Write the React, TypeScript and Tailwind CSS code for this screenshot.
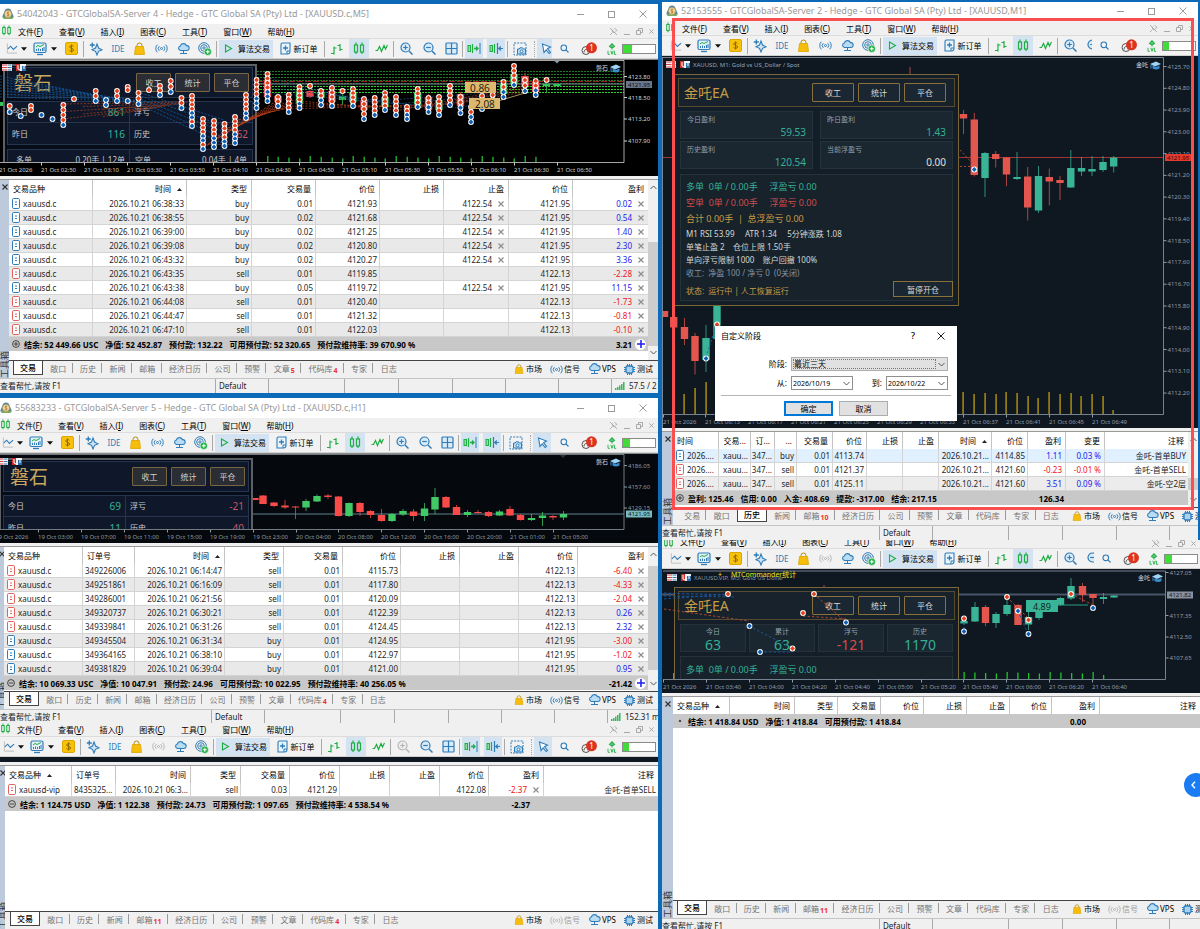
import type { ReactNode } from 'react';
import clsx from 'clsx';

type IconProps = { className?: string };

const BLUE = '#2f7cb8';
const GREEN = '#1fae44';

/* ---------- icons ---------- */

const LogoIcon = () => (
  <svg width="12" height="12" viewBox="0 0 12 12" className="shrink-0">
    <path d="M6 .5c2 0 3 1 3.600 3l1.900 4.500c.3 1.500-.6 3-2.500 3H3c-1.900 0-2.800-1.500-2.500-3L2.400 3.500C3 1.500 4 .5 6 .5z" fill="#5a86a0" />
    <path d="M.6 8.500c.8 2 2 2.500 3.600 2.500H9c1.800 0 2.700-1.200 2.500-2.800-2 1.300-4 1.600-6 1.300C3.500 9.300 1.900 9 .6 8.500z" fill="#7fae5a" />
    <circle cx="6" cy="6" r="3.400" fill="#f4e3b8" stroke="#c9963a" strokeWidth=".7" />
    <path d="M7.300 4.700c-.5-.6-2.500-.7-2.500.4 0 1.200 2.500.6 2.500 1.900 0 1.100-2.100 1-2.700.3M6 3.800v4.500" fill="none" stroke="#b07a1e" strokeWidth=".8" />
  </svg>
);

const CandlesIcon = ({ className }: IconProps) => (
  <svg width="12" height="13" viewBox="0 0 12 13" fill="none" stroke={GREEN} strokeWidth="1.200" className={className}>
    <rect x="1.500" y="3" width="3" height="7" />
    <rect x="7.500" y="3" width="3" height="7" />
    <path d="M3 .5V3M3 10v2M9 .5V3M9 10v2" />
  </svg>
);

const LineIcon = () => (
  <svg width="13" height="13" viewBox="0 0 13 13" fill="none">
    <path d="M1.500 1v10.500H12" stroke="#bdbdbd" />
    <path d="M2 7l3-3 3 3.500L12 4" stroke={BLUE} strokeWidth="1.200" />
  </svg>
);

const CaretIcon = () => (
  <svg width="6" height="4" viewBox="0 0 6 4">
    <path d="M0 .2h6L3 3.700z" fill="#111" />
  </svg>
);

const MonitorIcon = () => (
  <svg width="14" height="14" viewBox="0 0 14 14" fill="none">
    <rect x="1" y="1" width="12" height="9.500" rx="1.500" fill="#e3f0fa" stroke={BLUE} strokeWidth="1.200" />
    <path d="M3 5l2-1.500 2 1 4-2" stroke={GREEN} />
    <path d="M3.500 9V7M5.500 9V6.500M7.500 9V7M9.500 9V6M11 9V5" stroke={BLUE} />
    <path d="M4 12.500h6" stroke={BLUE} strokeWidth="1.300" />
  </svg>
);

const DollarIcon = () => (
  <svg width="13" height="13" viewBox="0 0 13 13">
    <rect x=".5" y=".5" width="12" height="12" rx="1.500" fill="#f9c20a" stroke="#dda500" />
    <path d="M8.500 4.300C7.800 3.300 4.700 3.300 4.700 5c0 1.900 3.900 1 3.900 3 0 1.600-3 1.700-4.200.5M6.500 2.500v8" fill="none" stroke="#8f6b00" />
  </svg>
);

const SparkleIcon = () => (
  <svg width="14" height="14" viewBox="0 0 14 14" fill="none" stroke={BLUE}>
    <path d="M8 2l1.500 4L13 7.800 9.500 9.300 8 13 6.500 9.300 3 7.800 6.500 6z" fill="#cfe4f5" strokeWidth="1.100" />
    <path d="M3.300.5v5M.8 3h5" strokeWidth="1.300" />
  </svg>
);

const BagIcon = ({ size = 13 }: { size?: number }) => (
  <svg width={size} height={size} viewBox="0 0 13 13">
    <path d="M4 5V3.500a2.500 2.500 0 015 0V5" fill="none" stroke="#b88a00" />
    <path d="M2.500 4.500h8l1 8h-10z" fill="#f7bd0b" stroke="#dba400" strokeWidth=".8" />
  </svg>
);

const SignalIcon = ({ muted }: { muted?: boolean }) => (
  <svg width="13" height="11" viewBox="0 0 13 11" fill="none" stroke={muted ? '#b5b5b5' : BLUE}>
    <circle cx="6.500" cy="5.500" r="1" />
    <path d="M4.300 3.200a3.200 3.200 0 000 4.600M8.700 3.200a3.200 3.200 0 010 4.600M2.300 1.700a5.500 5.500 0 000 7.600M10.700 1.700a5.500 5.500 0 010 7.600" />
  </svg>
);

const CloudIcon = () => (
  <svg width="13" height="12" viewBox="0 0 13 12" fill="none" stroke={BLUE}>
    <path d="M3.500 7.500a2.300 2.300 0 01-.2-4.500 3.300 3.300 0 016.200-.3 2.400 2.400 0 01.5 4.800z" fill="#b9dcf5" strokeWidth="1.100" />
    <path d="M6.500 7.500V10M3 10.500h7M5.500 10.500h2" />
  </svg>
);

const RadarIcon = () => (
  <svg width="14" height="14" viewBox="0 0 14 14" fill="none" stroke={BLUE}>
    <circle cx="6" cy="6" r="5.300" />
    <circle cx="6" cy="6" r="3.300" />
    <circle cx="6" cy="6" r="1.200" />
    <circle cx="9.800" cy="9.800" r="3.700" fill={GREEN} stroke="#fff" strokeWidth=".6" />
    <path d="M9.800 7.800v4M7.800 9.800h4" stroke="#fff" strokeWidth="1.100" />
  </svg>
);

const PlayIcon = () => (
  <svg width="9" height="9" viewBox="0 0 9 9" fill="none" stroke={GREEN} strokeWidth="1.100">
    <path d="M1.500 1l6 3.500-6 3.500z" />
  </svg>
);

const NewOrderIcon = () => (
  <svg width="11" height="13" viewBox="0 0 11 13" fill="none" stroke={BLUE}>
    <path d="M1 2.500C1 1 2 1 2.500 1H10v8.500C10 11 9 12 7.500 12H1z" fill="#eaf4fc" strokeWidth="1.100" />
    <path d="M5.500 3.500v5M3 6h5" strokeWidth="1.300" />
    <path d="M7 12V9h3" />
  </svg>
);

const BarsIcon = () => (
  <svg width="12" height="12" viewBox="0 0 12 12" fill="none" stroke={GREEN} strokeWidth="1.200">
    <path d="M3 3.500v8M0 10.500h3M3 5h2.500M9 1v7M6.500 2.500H9M9 6.500h2.500" />
  </svg>
);

const ZigzagIcon = () => (
  <svg width="13" height="9" viewBox="0 0 13 9" fill="none" stroke={GREEN} strokeWidth="1.200">
    <path d="M.5 6.500h2l2-4 2 5 2.500-6 1.500 3.500L12.500 1" />
  </svg>
);

const ZoomIcon = ({ plus, muted }: { plus?: boolean; muted?: boolean }) => (
  <svg width="13" height="13" viewBox="0 0 13 13" fill="none" stroke={muted ? '#b5b5b5' : BLUE}>
    <circle cx="5.500" cy="5.500" r="4.500" fill={muted ? '#eee' : '#d9ebf8'} strokeWidth="1.200" />
    <path d={plus ? 'M5.500 3.200v4.600M3.200 5.500h4.600' : 'M3.200 5.500h4.600'} strokeWidth="1.200" />
    <path d="M9 9l3.500 3.500" strokeWidth="1.500" />
  </svg>
);

const TilesIcon = () => (
  <svg width="13" height="13" viewBox="0 0 13 13" fill="#d9ebf8" stroke={BLUE} strokeWidth="1.200">
    <rect x="1" y="1" width="11" height="11" rx="1" />
    <path d="M6.500 1v11M1 6.500h11" />
  </svg>
);

const ShiftIcon = ({ left }: { left?: boolean }) => (
  <svg width="14" height="13" viewBox="0 0 14 13" fill="none">
    <rect x="1" y="3.500" width="2.500" height="6" fill="#8fdc9f" stroke={GREEN} />
    <path d="M5.500 2v9" stroke={GREEN} strokeWidth="1.200" />
    {left ? (
      <path d="M8.500 1v11M14 6.500h-4M11.800 4.500l-2 2 2 2" stroke={BLUE} strokeWidth="1.200" />
    ) : (
      <>
        <path d="M7 6.500h3.500M9 4.500l2 2-2 2" stroke={GREEN} strokeWidth="1.300" />
        <path d="M13 1v11" stroke={BLUE} />
      </>
    )}
  </svg>
);

const CameraIcon = () => (
  <svg width="14" height="14" viewBox="0 0 14 14" fill="none" stroke={BLUE}>
    <path d="M1 1h12v12H1z" strokeDasharray="2 1.200" />
    <path d="M4.500 7h1.700l.8-1.200h2.500l.8 1.200h2.200v5H4.500z" fill="#b9dcf5" />
    <circle cx="8.500" cy="9.400" r="1.400" fill="#fff" />
  </svg>
);

const CursorIcon = () => (
  <svg width="11" height="12" viewBox="0 0 11 12" fill="#fff" stroke={BLUE} strokeWidth="1.100">
    <path d="M1.500 1l8 3-3 1.700 3 3.800-1.300 1-3-3.700L3 9.500z" />
  </svg>
);

const SearchIcon = () => (
  <svg width="9" height="9" viewBox="0 0 9 9" fill="none" stroke={BLUE} strokeWidth="1.100">
    <circle cx="3.800" cy="3.800" r="2.800" />
    <path d="M6 6l2.500 2.500" />
  </svg>
);

const LevelIcon = () => (
  <svg width="10" height="12" viewBox="0 0 10 12" fill="none" stroke={GREEN} strokeWidth="1.100">
    <path d="M5 6.500V1M2.500 3.300L5 .8l2.500 2.500L5 5z" />
    <path d="M1 7.800v3.500h1.800M3.800 7.800L5 11.300l1.200-3.500M7.400 7.800v3.500h1.800" strokeWidth=".9" />
  </svg>
);

const ChipIcon = () => (
  <svg width="11" height="11" viewBox="0 0 11 11" fill="none" stroke={BLUE}>
    <rect x="2" y="2" width="7" height="7" rx="1.500" fill="#a9d2f0" strokeWidth="1.300" />
    <path d="M3.500 0v2M5.500 0v2M7.500 0v2M3.500 9v2M5.500 9v2M7.500 9v2M0 3.500h2M0 5.500h2M0 7.500h2M9 3.500h2M9 5.500h2M9 7.500h2" />
  </svg>
);

const DocIcon = ({ sell }: { sell: boolean }) => (
  <svg width="8" height="11" viewBox="0 0 8 11" fill="#fff" stroke={sell ? '#e2625f' : BLUE} className="shrink-0">
    <rect x=".5" y=".5" width="7" height="10" rx="1.200" />
    <path d="M3 4h2M3 6.500h2" />
  </svg>
);

const SummaryMark = ({ kind }: { kind: 'plus' | 'minus' | 'dot' }) => (
  <svg width="8" height="8" viewBox="0 0 8 8" fill="none" stroke="#333" strokeWidth=".9" className="mr-[4px] inline-block shrink-0">
    {kind === 'dot' ? (
      <circle cx="4" cy="4" r=".8" fill="#333" />
    ) : (
      <>
        <circle cx="4" cy="4" r="3.400" />
        <path d={kind === 'plus' ? 'M4 2v4M2 4h4' : 'M2 4h4'} />
      </>
    )}
  </svg>
);

const PinIcon = () => (
  <svg width="9" height="9" viewBox="0 0 9 9" fill="none" stroke="#a9a9a9" strokeWidth=".9">
    <path d="M1 1l7 7M5.500 1l2.500 2.500-1.500.6M4 2.500L3 4l2 2 1.500-1M3.500 5.500L1 8" />
  </svg>
);

const Cross = ({ className }: IconProps) => (
  <svg width="6" height="6" viewBox="0 0 6 6" fill="none" stroke="currentColor" strokeWidth="1.200" className={className}>
    <path d="M.5.5l5 5M5.500.5l-5 5" />
  </svg>
);

const Chevron = ({ className }: IconProps) => (
  <svg width="7" height="5" viewBox="0 0 7 5" fill="none" stroke="#555" className={className}>
    <path d="M.5 1l3 3 3-3" />
  </svg>
);

/* ---------- window chrome ---------- */

const TitleBar = ({ title, className }: { title: string; className?: string }) => (
  <header className={clsx('flex items-center gap-[3px] overflow-hidden bg-white text-[#999]', className)}>
    <LogoIcon />
    <h2 className="flex-1 truncate text-[9px]">{title}</h2>
    <div className="flex items-center gap-6 pr-[11px]">
      <button aria-label="最小化" className="h-px w-[7px] bg-[#9a9a9a]" />
      <button aria-label="最大化" className="size-[7px] border border-[#9a9a9a]" />
      <button aria-label="关闭" className="text-[#9a9a9a]">
        <svg width="8" height="8" viewBox="0 0 8 8" stroke="currentColor">
          <path d="M.5.5l7 7M7.500.5l-7 7" />
        </svg>
      </button>
    </div>
  </header>
);

const menus = [
  ['文件', 'F'],
  ['查看', 'V'],
  ['插入', 'I'],
  ['图表', 'C'],
  ['工具', 'T'],
  ['窗口', 'W'],
  ['帮助', 'H'],
];

const MenuBar = ({ className }: { className?: string }) => (
  <nav className={clsx('flex overflow-hidden border-b border-[#dcdcdc] bg-[#f0f0f0]', className)}>
    <CandlesIcon className="mr-[6px] size-[11px] shrink-0" />
    <div className="flex flex-1 gap-4 leading-[12px] text-black">
      {menus.map(([name, key]) => (
        <button key={key} className="whitespace-nowrap">
          {name}(<u>{key}</u>)
        </button>
      ))}
    </div>
    <div className="flex items-center gap-[6px] pr-[4px] text-[#a9a9a9]">
      <PinIcon />
      <span className="mt-[5px] h-px w-[6px] bg-[#a9a9a9]" />
      <svg width="7" height="7" viewBox="0 0 7 7" fill="none" stroke="currentColor">
        <path d="M.5 2.500h4v4h-4zM2.500 2.500v-2h4v4h-2" />
      </svg>
      <Cross className="size-[5px]" />
    </div>
  </nav>
);

const Tool = ({ label, className, children }: { label: string; className: string; children: ReactNode }) => (
  <button aria-label={label} className={clsx('flex h-full shrink-0 items-center justify-center', className)}>
    {children}
  </button>
);

const Sep = () => <i className="h-4 w-px shrink-0 bg-[#a8a8a8]" />;

interface ToolbarProps {
  className: string;
  battery: string;
  signalMuted?: boolean;
  zoomMuted?: boolean;
}

const Toolbar = ({ className, battery, signalMuted, zoomMuted }: ToolbarProps) => (
  <div className="flex h-5 overflow-hidden border-b border-[#d0d0d0] bg-[#f2f2f2]">
    <div className="min-w-0 flex-1 overflow-hidden">
      <div className={clsx('flex h-full items-center', className)}>
        <Tool label="线形图" className="w-3"><LineIcon /></Tool>
        <Tool label="线形图选项" className="w-3"><CaretIcon /></Tool>
        <Tool label="指标" className="ml-px w-[18px]"><MonitorIcon /></Tool>
        <Tool label="指标选项" className="w-[10px]"><CaretIcon /></Tool>
        <Tool label="报价" className="w-6"><DollarIcon /></Tool>
        <Sep />
        <Tool label="智能助手" className="w-6"><SparkleIcon /></Tool>
        <Tool label="IDE" className="w-5 text-[8px] text-[#2f7cb8]">IDE</Tool>
        <Tool label="市场" className="w-[22px]"><BagIcon /></Tool>
        <Tool label="信号" className="w-[22px]"><SignalIcon muted={signalMuted} /></Tool>
        <Tool label="VPS" className="w-[22px]"><CloudIcon /></Tool>
        <Tool label="复制" className="w-[22px]"><RadarIcon /></Tool>
        <Sep />
        <button className="ml-[2px] flex h-[18px] w-[54px] shrink-0 items-center gap-[5px] bg-[#d3e3f2] pl-[5px] whitespace-nowrap text-black">
          <PlayIcon />
          算法交易
        </button>
        <button className="flex h-full w-[51px] shrink-0 items-center justify-center gap-[3px] whitespace-nowrap text-black">
          <NewOrderIcon />
          新订单
        </button>
        <Sep />
        <Tool label="柱状图" className="w-6"><BarsIcon /></Tool>
        <Tool label="蜡烛图" className="w-5 bg-[#d3e3f2]"><CandlesIcon /></Tool>
        <Tool label="折线图" className="w-6"><ZigzagIcon /></Tool>
        <Sep />
        <Tool label="放大" className="w-6"><ZoomIcon plus muted={zoomMuted} /></Tool>
        <Tool label="缩小" className="w-[22px]"><ZoomIcon /></Tool>
        <Tool label="平铺" className="w-[22px]"><TilesIcon /></Tool>
        <Sep />
        <Tool label="自动滚动" className="ml-[2px] w-[18px] bg-[#d3e3f2]"><ShiftIcon /></Tool>
        <Tool label="图表平移" className="ml-1 w-[18px] bg-[#d3e3f2]"><ShiftIcon left /></Tool>
        <i className="ml-[2px] h-4 w-px shrink-0 bg-[#a8a8a8]" />
        <Tool label="截图" className="w-6"><CameraIcon /></Tool>
        <i className="mx-[2px] h-4 shrink-0 border-l border-dotted border-[#a8a8a8]" />
        <Tool label="光标" className="w-[18px] bg-[#d3e3f2]"><CursorIcon /></Tool>
      </div>
    </div>
    <div className="flex w-[106px] shrink-0 items-center">
      <Tool label="搜索" className="w-6"><SearchIcon /></Tool>
      <button aria-label="通知" className="relative ml-[4px] h-full w-5">
        <svg width="18" height="14" viewBox="0 0 18 14" fill="none">
          <circle cx="6" cy="8.500" r="4" stroke="#555" />
          <path d="M4 10.500c0-4 4-4 4 0" stroke="#555" />
          <circle cx="11.500" cy="5.800" r="5.500" fill="#dd3420" />
        </svg>
        <span className="absolute top-[4px] left-[9px] w-[5px] text-center text-[8px] leading-[9px] text-white">1</span>
      </button>
      <Tool label="等级" className="ml-[2px] w-5"><LevelIcon /></Tool>
      <div className="flex h-[10px] w-[34px] border border-[#8a8a8a] bg-white">
        <i className={clsx('bg-[#3fdc3a]', battery)} />
      </div>
    </div>
  </div>
);

const StatusBar = ({ first, ping, className }: { first: string; ping?: string; className?: string }) => (
  <footer className={clsx('flex shrink-0 overflow-hidden border-t border-[#c4c4c4] bg-[#f0f0f0] leading-[14px] whitespace-nowrap text-[#1d1d1d]', className)}>
    <span className={clsx('shrink-0', first)}>查看帮忙,请按 F1</span>
    <span className="w-[53px] shrink-0 border-l border-[#a9a9a9] pl-[3px]">Default</span>
    <i className="w-[76px] shrink-0 border-l border-[#a9a9a9]" />
    <i className="w-[54px] shrink-0 border-l border-[#a9a9a9]" />
    <i className="w-[54px] shrink-0 border-l border-[#a9a9a9]" />
    <i className="w-[53px] shrink-0 border-l border-[#a9a9a9]" />
    <i className="w-[53px] shrink-0 border-l border-[#a9a9a9]" />
    {ping && (
      <>
        <i className="w-[53px] shrink-0 border-l border-[#a9a9a9]" />
        <span className="flex items-center gap-[4px] border-l border-[#a9a9a9] pl-[3px]">
          <svg width="10" height="8" viewBox="0 0 10 8" stroke={GREEN} strokeWidth="1.300">
            <path d="M.8 8V6M2.800 8V5M4.800 8V3.500M6.800 8V2M8.800 8V0" />
          </svg>
          {ping}
        </span>
      </>
    )}
  </footer>
);

/* ---------- terminal ---------- */

const tabNames = ['交易', '敞口', '历史', '新闻', '邮箱', '经济日历', '公司', '预警', '文章', '代码库', '专家', '日志'];

interface TabBarProps {
  active: string;
  badges: Record<string, string>;
  className: string;
  signalMuted?: boolean;
}

const TabBar = ({ active, badges, className, signalMuted }: TabBarProps) => (
  <div className="flex h-[18px] shrink-0 items-start overflow-hidden border-t border-[#444] bg-[#f0f0f0]">
    <div role="tablist" className={clsx('flex shrink-0 items-center justify-between', className)}>
      {tabNames.map((name, i) => {
        const on = name === active;
        const beforeOn = tabNames[i + 1] === active;
        return (
          <button
            key={name}
            role="tab"
            aria-selected={on}
            className={clsx(
              'flex h-[14px] items-center justify-center leading-[13px] whitespace-nowrap',
              on ? '-mt-px w-[30px] border border-t-0 border-[#444] bg-white font-medium text-black' : 'grow px-[2px] text-[#747474]',
            )}
          >
            <span className="grow text-center">
              {name}
              {badges[name] && <sub className="ml-px text-[7px] font-bold text-[#f03030]">{badges[name]}</sub>}
            </span>
            {!on && !beforeOn && i < tabNames.length - 1 && <i className="-mr-[2px] h-[10px] w-px bg-[#9a9a9a]" />}
          </button>
        );
      })}
    </div>
    <div className="ml-auto flex h-4 shrink-0 items-center gap-2 pr-[5px] pl-[6px] whitespace-nowrap text-black">
      <button className="flex items-center gap-[2px]"><BagIcon size={10} />市场</button>
      <button className={clsx('flex items-center gap-px', signalMuted && 'text-[#9a9a9a]')}>
        <SignalIcon muted={signalMuted} />信号
      </button>
      <button className="flex items-center gap-px"><CloudIcon />VPS</button>
      <button className="flex items-center gap-[2px]"><ChipIcon />测试</button>
    </div>
  </div>
);

interface Column {
  label: string;
  width?: string;
  kind?: 'symbol' | 'left' | 'closable' | 'signed';
  sorted?: boolean;
}

interface TerminalTableProps {
  columns: Column[];
  rows: string[][];
  sellAt: number;
  summary: string[];
  total: string;
  totalAt: number;
  mark?: 'plus' | 'minus' | 'dot';
  highlightFirst?: boolean;
  addable?: boolean;
}

const signColor = (value: string) => (value.startsWith('-') ? 'text-[#f01515]' : 'text-[#1a1af0]');

const rowColor = (r: number, highlightFirst?: boolean) => {
  if (highlightFirst) return ['bg-[#e0f0ff]', 'bg-white', 'bg-[#ececec]'][r];
  return r % 2 ? 'bg-[#e9e9e9]' : 'bg-white';
};

const TerminalTable = ({ columns, rows, sellAt, summary, total, totalAt, mark = 'plus', highlightFirst, addable }: TerminalTableProps) => (
  <table className="w-full table-fixed border-separate border-spacing-0 text-[#1f1f1f]">
    <thead>
      <tr className="h-[17px]">
        {columns.map((col, i) => (
          <th
            key={i}
            className={clsx(
              'truncate border-[#c4c4c4] p-0 font-normal text-black',
              col.width,
              i < columns.length - 1 && 'border-r',
              col.kind === 'symbol' || col.kind === 'left' ? 'pl-[4px] text-left' : 'pr-[4px] text-right',
            )}
          >
            {col.label}
            {col.sorted && (
              <span className="ml-[6px] inline-block align-middle">
                <svg width="5" height="3" viewBox="0 0 5 3" className="block"><path d="M0 3h5L2.500 0z" fill="#222" /></svg>
              </span>
            )}
          </th>
        ))}
      </tr>
    </thead>
    <tbody>
      {rows.map((row, r) => (
        <tr key={r} className={clsx('h-[14px]', rowColor(r, highlightFirst))}>
          {row.map((cell, i) => {
            const { kind } = columns[i];
            const last = i === columns.length - 1;
            return (
              <td key={i} className={clsx('border-b border-[#d4d4d4] p-0 leading-[12px]', !last && 'border-r')}>
                {kind === 'symbol' && (
                  <span className="flex items-center gap-[3px] overflow-hidden pl-[3px]">
                    <DocIcon sell={row[sellAt] === 'sell'} />
                    <span className="whitespace-nowrap">{cell}</span>
                  </span>
                )}
                {kind === 'left' && <span className="block truncate pl-[2px]">{cell}</span>}
                {kind === 'closable' && cell && (
                  <span className={clsx('flex items-center justify-end gap-[6px] pr-[4px]', columns[i].label === '盈利' && signColor(cell))}>
                    {cell}
                    <button aria-label="平仓" className="text-[#8d8d8d]"><Cross /></button>
                  </span>
                )}
                {kind === 'signed' && <span className={clsx('block pr-[3px] text-right', signColor(cell))}>{cell}</span>}
                {!kind && <span className="block pr-[2px] text-right whitespace-nowrap">{cell}</span>}
              </td>
            );
          })}
        </tr>
      ))}
    </tbody>
    <tfoot>
      <tr className="h-[14px] bg-[#c8c8c8] font-bold text-black">
        <td colSpan={totalAt} className="p-0 pl-[3px] leading-[13px] whitespace-nowrap">
          <span className="flex items-center">
            <SummaryMark kind={mark} />
            <span className="flex gap-[7px]">
              {summary.map((part) => (
                <span key={part}>{part}</span>
              ))}
            </span>
          </span>
        </td>
        <td className="p-0 leading-[13px]">
          <span className={clsx('flex items-center justify-end', addable ? 'gap-[3px] pr-[2px]' : totalAt === 10 ? 'pr-[2px]' : 'pr-[14px]')}>
            {total}
            {addable && (
              <button aria-label="新订单" className="flex size-[11px] items-center justify-center rounded-full bg-white">
                <svg width="8" height="8" viewBox="0 0 8 8" stroke="#2222ee" strokeWidth="1.600"><path d="M4 0v8M0 4h8" /></svg>
              </button>
            )}
          </span>
        </td>
        {columns.length > totalAt + 1 && <td colSpan={columns.length - totalAt - 1} className="p-0" />}
      </tr>
    </tfoot>
  </table>
);

const Terminal = ({ sidebar, scroll, children, tabs }: { sidebar: string; scroll?: string; children: ReactNode; tabs: ReactNode }) => (
  <section className="flex flex-1 border-t border-[#999] bg-white">
    <aside className={clsx('flex shrink-0 flex-col items-center justify-between overflow-hidden bg-[#bccadb] pt-[4px] text-[#333]', sidebar)}>
      <button aria-label="隐藏工具箱"><Cross /></button>
      <span className="rotate-180 text-[9px] leading-[9px] [text-orientation:sideways] [writing-mode:vertical-rl]">工具箱</span>
    </aside>
    <div className="flex min-w-0 flex-1 flex-col">
      <div className="flex flex-1">
        <div className="min-w-0 flex-1">{children}</div>
        {scroll && (
          <div className="flex w-[10px] shrink-0 flex-col items-center bg-[#f0f0f0] py-[5px]">
            <Chevron className="shrink-0 rotate-180" />
            <i className={clsx('w-full bg-[#cdcdcd]', scroll)} />
            <Chevron className="mt-auto shrink-0" />
          </div>
        )}
      </div>
      {tabs}
    </div>
  </section>
);

/* ---------- charts ---------- */

// x, wick top, wick bottom, body top, body bottom, direction
type Candle = [number, number, number, number, number, 'u' | 'd'];

const Candles = ({ data, up, down }: { data: Candle[]; up: string; down: string }) => (
  <>
    {data.map(([x, wt, wb, bt, bb, dir]) => (
      <g key={`${x}-${wt}`} fill={dir === 'u' ? up : down}>
        <rect x={x - 0.5} y={wt} width="1" height={wb - wt} opacity=".75" />
        <rect x={x - 3.7} y={bt} width="7.400" height={bb - bt} />
      </g>
    ))}
  </>
);

const Marker = ({ x, y, sell }: { x: number; y: number; sell: boolean }) => (
  <g>
    <circle cx={x} cy={y} r="2.900" fill="#fff" />
    <path d={`M${x} ${y - 2.4}L${x + 2.4} ${y}L${x} ${y + 2.4}L${x - 2.4} ${y}z`} fill={sell ? '#e2431e' : '#0f5fb4'} />
  </g>
);

interface AxesProps {
  right: number;
  bottom: number;
  top: number;
  left?: number;
  prices: [number, string][];
  times: [number, string][];
  color: string;
}

const Axes = ({ right, bottom, top, left = 0, prices, times, color }: AxesProps) => (
  <g fontSize="6" fill={color} stroke="none">
    <path d={`M${left} ${top}H${right}V${bottom}H${left}`} fill="none" stroke={color} opacity=".8" />
    {prices.map(([y, text]) => (
      <g key={text}>
        <path d={`M${right} ${y}h3`} stroke={color} />
        <text x={right + 4} y={y + 2}>{text}</text>
      </g>
    ))}
    {times.map(([x, text]) => (
      <g key={text}>
        <path d={`M${x + 0.5} ${bottom}v3`} stroke={color} />
        <text x={x} y={bottom + 9}>{text}</text>
      </g>
    ))}
  </g>
);

const PriceTag = ({ x, y, text, fill, color }: { x: number; y: number; text: string; fill: string; color: string }) => (
  <g>
    <rect x={x} y={y - 3.5} width="26" height="7" fill={fill} />
    <text x={x + 2} y={y + 2} fontSize="6" fill={color}>{text}</text>
  </g>
);

const Badges = ({ x, y }: { x: number; y: number }) => (
  <g>
    <rect x={x} y={y} width="10" height="7" fill="#eef2f6" />
    <path d={`M${x} ${y + 1}h5M${x} ${y + 3.5}h5M${x} ${y + 6}h5`} stroke="#d8403c" />
    <path d={`M${x + 5.5} ${y + 1}h4M${x + 5.5} ${y + 3.5}h4M${x + 5.5} ${y + 6}h4`} stroke="#3a74a8" />
    <rect x={x + 14} y={y} width="10" height="7" fill="#eef2f6" />
    <path d={`M${x + 14} ${y}h4v7h-4z`} fill="#c9302c" />
    <path d={`M${x + 20} ${y + 2}h4v5h-4z`} fill="#2d6da8" />
    <path d={`M${x + 16} ${y + 1}v4l2 1M${x + 19} ${y + 1}h3v4`} stroke="#fff" fill="none" />
  </g>
);

const CapLabel = ({ x, y, name }: { x: number; y: number; name: string }) => (
  <g>
    <text x={x - 1} y={y + 2} fontSize="6" fill="#d5dbe2">{name}</text>
    <path d={`M${x + 13} ${y - 1}l6-2.500 5 2.500-6 2.500z`} fill="#9fd4f5" />
    <path d={`M${x + 15.5} ${y + 0.5}v3c2 1.200 5 1.200 7 0v-3l-3.500 1.500z`} fill="#3b8fd0" />
    <path d={`M${x + 14} ${y}v3.500`} stroke="#3b8fd0" />
  </g>
);

// x, first y, last y of each column of deal markers
const dealStacks: [number, number, number, 's' | 'b' | 'm'][] = [
  [9.7, 106, 112, 'm'], [20.7, 116, 116, 'b'], [31, 106, 110, 's'], [41.5, 115, 115, 'b'], [52.5, 119, 119, 'b'],
  [63.3, 105, 125, 'm'], [74, 99, 99, 's'], [95.7, 91, 101, 'm'], [106, 100, 105, 'b'], [117, 91, 101, 'm'],
  [127.700, 87, 90, 's'], [127.700, 101, 101, 'b'], [138.500, 93, 104, 'm'], [149, 90, 90, 's'], [160, 86, 95, 'm'],
  [170.700, 81, 92, 'm'], [181.500, 98, 108, 'm'], [192, 96, 126, 'm'], [203, 119, 149, 'm'], [214, 121, 147, 'm'],
  [224.500, 124, 146, 'm'], [235, 117, 143, 'm'], [246, 95, 118, 'm'], [256.500, 80, 108, 'm'], [267.500, 74, 101, 'm'],
  [278, 97, 106, 'm'], [288.700, 95, 112, 'm'], [299.500, 87, 108, 'm'], [310, 86, 86, 's'], [321, 91, 105, 'm'],
  [332, 88, 106, 'm'], [342.500, 91, 91, 's'], [353, 89, 106, 'm'], [364, 99, 119, 'm'], [374.700, 98, 115, 'm'],
  [385, 93, 110, 'm'], [396, 97, 115, 'm'], [407, 107, 119, 'm'], [417.700, 89, 107, 'm'], [428.500, 98, 112, 'm'],
  [439, 97, 115, 'm'], [450, 86, 105, 'm'], [460.500, 97, 113, 'm'], [471, 107, 122, 'm'], [482, 96, 109, 'm'],
  [492.700, 95, 100, 'm'], [503.500, 82, 97, 'm'], [514, 66, 85, 'm'], [525, 80, 91, 'm'], [535.700, 81, 95, 'm'], [546.500, 80, 80, 's'],
];

const m5Candles: Candle[] = [
  [1, 102, 106, 102, 106, 'u'], [267.500, 78, 97, 80, 97, 'd'], [278, 95, 106, 96, 102, 'd'], [299.500, 90, 104, 92, 103, 'u'],
  [310, 85, 98, 91, 97, 'd'], [321, 88, 106, 92, 98, 'u'], [332, 90, 104, 91, 102, 'd'], [342.500, 90, 105, 96, 100, 'u'],
  [353, 90, 106, 92, 102, 'u'], [364, 98, 112, 100, 110, 'd'], [385, 94, 110, 97, 107, 'u'], [417.700, 88, 110, 93, 108, 'u'],
  [428.500, 94, 112, 97, 110, 'd'], [439, 96, 113, 100, 110, 'u'], [460.500, 92, 113, 94, 106, 'd'], [503.500, 82, 95, 84, 94, 'u'],
  [514, 70, 88, 74, 84, 'u'], [525, 73, 92, 76, 86, 'd'], [535.700, 79, 95, 82, 92, 'd'], [546.500, 79, 92, 84, 86, 'u'], [557, 84, 86, 84, 86, 'u'],
];

const PanelButton = ({ className, children }: { className: string; children: ReactNode }) => (
  <button className={clsx('flex h-[19px] items-center justify-center rounded-[1px] border text-[8px]', className)}>{children}</button>
);

interface StonePanelProps {
  className: string;
  values: [string, string, string, string];
  orders?: [string, string];
}

const StonePanel = ({ className, values, orders }: StonePanelProps) => {
  const cells = [
    ['今日', values[0], 'text-[#35b39c]'],
    ['浮亏', values[1], 'text-[#c75863]'],
    ['昨日', values[2], 'text-[#35b39c]'],
    ['历史', values[3], 'text-[#c75863]'],
  ];
  return (
    <div className={clsx('absolute w-[254px] overflow-hidden border-2 border-b-0 border-[#5d6064] bg-[#070d18] px-[2px] pt-px', className)}>
      <div className="flex h-[31px] items-center gap-[4px] border border-[#26354d] bg-[#0f182a] pr-[3px] pl-[6px]">
        <h3 className="flex-1 text-[19px] leading-[20px] text-[#c9a860]">磐石</h3>
        {['收工', '统计', '平仓'].map((name) => (
          <PanelButton key={name} className="w-[35px] border-[#79663f] bg-[#2a2d33] text-[#d2d2d2]">{name}</PanelButton>
        ))}
      </div>
      <div className="mt-[3px] grid grid-cols-2 border border-[#26354d] bg-[#0f182a]">
        {cells.map(([name, value, tone], i) => (
          <div key={name} className={clsx('flex h-[21px] items-center justify-between border-[#26354d] px-[4px] text-[#c8ccd2]', i < 2 && 'border-b', i % 2 === 0 && 'border-r')}>
            <span>{name}</span>
            <span className={clsx('text-[10px]', tone)}>{value}</span>
          </div>
        ))}
      </div>
      {orders && (
        <div className="mt-[4px] grid grid-cols-2 border border-[#26354d] bg-[#0f182a] text-[#c8ccd2]">
          <div className="flex h-5 items-center justify-between border-r border-[#26354d] pr-[4px] pl-2"><span>多单</span><span>{orders[0]}</span></div>
          <div className="flex h-5 items-center justify-between px-[5px]"><span>空单</span><span>{orders[1]}</span></div>
        </div>
      )}
    </div>
  );
};

const JinzhaPanel = ({ className, children }: { className: string; children: ReactNode }) => (
  <div className={clsx('absolute w-[285px] overflow-hidden border border-[#7b6637] bg-[#141e28] px-[3px] pt-[3px] text-[#d8d8d2]', className)}>
    <div className="flex h-[29px] items-center gap-[4px] border border-[#574b2f] bg-[#17222d] pr-2 pl-[5px]">
      <h3 className="flex-1 text-[14px] leading-[18px] text-[#c69c45]">金吒EA</h3>
      {['收工', '统计', '平仓'].map((name) => (
        <PanelButton key={name} className="w-[42px] border-[#8a713b] bg-[#1a2632] text-[#dcdcd6]">{name}</PanelButton>
      ))}
    </div>
    {children}
  </div>
);

const ScalperChart = () => (
  <div className="relative h-[117px] overflow-hidden bg-black">
    <svg width="660" height="117" viewBox="0 59 660 117" className="block">
      {Array.from({ length: 8 }, (_, i) => (
        <path key={i} d={`M257 ${71.5 + i * 3}H624`} stroke={i > 4 ? '#2bd12b' : '#1c7a24'} strokeDasharray="2 1" />
      ))}
      <path d="M257 81.500H624" stroke="#9c1d1d" strokeDasharray="6 2" />
      <path d="M257 84H624" stroke="#7c8894" />
      <Candles data={m5Candles} up="#35c45c" down="#f2474a" />
      {dealStacks.slice(24, 50).map(([x], i) => (
        <rect key={x} x={x - 0.5} y={156 + (i % 4) * 0.8} width="1.500" height={6 - (i % 4) * 0.8} fill="#1fa32b" />
      ))}
      <rect x="0" y="59" width="660" height="1" fill="#8a8a8a" />
      <Axes
        right={624}
        bottom={162.5}
        top={60.5}
        color="#d0d0d0"
        prices={[[76.5, '4123.80'], [97.5, '4118.50'], [119, '4113.20'], [141, '4107.90']]}
        times={[
          [-1, '21 Oct 2026'], [41, '21 Oct 02:50'], [84, '21 Oct 03:10'], [127, '21 Oct 03:30'], [170, '21 Oct 03:50'], [213, '21 Oct 04:10'],
          [256, '21 Oct 04:30'], [299, '21 Oct 04:50'], [342, '21 Oct 05:10'], [385, '21 Oct 05:30'], [428, '21 Oct 05:50'], [471, '21 Oct 06:10'],
          [514, '21 Oct 06:30'], [557, '21 Oct 06:50'],
        ]}
      />
      <PriceTag x={626} y={84.5} text="4121.95" fill="#6b7788" color="#111" />
      <path d="M554 60.500h6l-3 3z" fill="#8a95a3" />
      <CapLabel x={597} y={68} name="磐石" />
    </svg>
    <StonePanel className="top-[5px] left-[3px] h-[98px]" values={['861', '', '116', '-62']} orders={['0.20手 | 12单', '0.04手 | 4单']} />
    <svg width="660" height="117" viewBox="0 59 660 117" className="absolute top-0 left-0">
      <g fill="none" strokeWidth=".8">
        {Array.from({ length: 8 }, (_, i) => (
          <path key={i} d={`M0 ${76 + i * 3}L${95 + i * 8} ${95 + i}`} stroke="#0f5c9e" strokeDasharray="2 1.500" />
        ))}
        {Array.from({ length: 7 }, (_, i) => (
          <path key={i} d={`M${63 + (i % 3) * 20} ${104 + i * 2.5}L${190 - i * 6} ${102 + i}`} stroke="#a03a1c" strokeDasharray="2 1.500" />
        ))}
        {Array.from({ length: 8 }, (_, i) => (
          <path key={i} d={`M${203 + i * 5} ${148 - i * 4}L${278 + i * 2} ${100 + i}`} stroke="#b8401c" strokeDasharray="3 1.500" />
        ))}
        {Array.from({ length: 5 }, (_, i) => (
          <path key={i} d={`M138 ${92 + i * 3}L224 ${120 + i * 6}`} stroke="#0f5c9e" strokeDasharray="2 1.500" />
        ))}
        {Array.from({ length: 4 }, (_, i) => (
          <path key={i} d={`M270 ${78 + i * 5}L${364 + i * 30} ${102 + i * 2}L500 ${92 + i * 3}`} stroke="#10497c" strokeDasharray="2 1.500" />
        ))}
        {Array.from({ length: 4 }, (_, i) => (
          <path key={i} d={`M288 ${100 + i * 3}L${400 + i * 18} ${110 - i * 2}L525 ${86 + i * 2}`} stroke="#a03a1c" strokeDasharray="2 1.500" />
        ))}
        <path d="M471 109L525 93" stroke="#d8b469" />
      </g>
      {dealStacks.map(([x, from, to, kind]) => {
        const steps = Math.max(1, Math.round((to - from) / 4.6) + 1);
        return (
          <g key={`${x}-${from}`}>
            {Array.from({ length: steps }, (_, i) => {
              const y = steps === 1 ? from : from + ((to - from) * i) / (steps - 1);
              return <Marker key={i} x={x} y={y} sell={kind === 's' || (kind === 'm' && (i < steps / 2 || (i % 3 === 0 && i < steps - 1)))} />;
            })}
          </g>
        );
      })}
      <Badges x={2} y={64} />
      <g fontSize="10" fill="#2c2412">
        <rect x="465" y="82" width="31" height="11" fill="#dcb96e" />
        <text x="470" y="91.500">0.86</text>
        <rect x="469" y="98" width="31" height="11" fill="#dcb96e" />
        <text x="475" y="107.500">2.08</text>
      </g>
    </svg>
  </div>
);

const h1Candles: Candle[] = [
  [255, 498, 500, 498, 500, 'd'], [263, 495, 504, 495.5, 504, 'd'], [274, 502, 507, 502.5, 506, 'd'], [285, 500, 509, 505.5, 507.5, 'd'],
  [295.5, 506, 519, 506.5, 507.5, 'd'], [306, 499, 511, 501, 507.5, 'u'], [317, 494.5, 502, 496, 501.5, 'u'], [328, 494, 499, 495.5, 497, 'd'],
  [338.5, 496, 516.500, 496.500, 516, 'd'], [349, 502.500, 517, 503, 516, 'u'], [360, 502, 516, 503, 512, 'd'], [370.500, 510, 518, 511, 515, 'd'],
  [381.500, 509, 521.500, 515, 521, 'd'], [392, 513, 522, 514, 521, 'u'], [403, 509, 516, 511, 514.500, 'u'], [413.500, 509, 521, 511.500, 516, 'd'],
  [424.500, 503, 521, 508.500, 516, 'u'], [435, 488, 514, 497, 509.500, 'u'], [446, 496, 508, 497, 507.500, 'd'], [456.500, 505, 515, 507, 515, 'd'],
  [467.500, 510, 517, 512, 515, 'u'], [478, 510, 514, 512, 513, 'd'], [488.500, 511, 517, 512, 516, 'd'], [499.500, 510, 516, 511.500, 515.500, 'u'],
  [510, 506, 516, 509, 515.500, 'd'], [520.500, 514, 520.500, 515, 520, 'd'], [531.500, 514, 521, 518, 520, 'u'], [542.500, 512, 526, 515.500, 518, 'u'],
  [553, 515, 520, 516, 517.500, 'd'], [563.500, 511, 520, 514, 517.500, 'u'],
];

const HourChart = () => (
  <div className="relative h-[90px] overflow-hidden bg-[#05090d]">
    <svg width="660" height="90" viewBox="0 453 660 90" className="block">
      <path d="M0 453.500H660" stroke="#8a8a8a" />
      <path d="M253 514H624" stroke="#5d8592" />
      <Candles data={h1Candles} up="#43c866" down="#fb4a4a" />
      <Axes
        right={624}
        bottom={529.5}
        top={454.5}
        color="#8f979e"
        prices={[[465.5, '4186.05'], [487, '4157.60'], [508, '4129.15']]}
        times={[
          [-5, '19 Oct 2026'], [38, '19 Oct 03:00'], [81, '19 Oct 07:00'], [124, '19 Oct 11:00'], [167, '19 Oct 15:00'], [210, '19 Oct 19:00'],
          [253, '19 Oct 23:00'], [296, '20 Oct 04:00'], [338, '20 Oct 08:00'], [381, '20 Oct 12:00'], [424, '20 Oct 16:00'], [467, '20 Oct 20:00'],
          [510, '21 Oct 01:00'], [553, '21 Oct 05:00'],
        ]}
      />
      <PriceTag x={626} y={514} text="4121.95" fill="#79b9be" color="#0b2226" />
      <path d="M560 455h6l-3 3z" fill="#2c3238" />
      <CapLabel x={597} y={462} name="磐石" />
    </svg>
    <StonePanel className="top-[5px] -left-px h-[71px]" values={['69', '-21', '11', '-40']} />
    <svg width="30" height="8" viewBox="0 458 30 8" className="absolute top-[5px] left-0"><Badges x={-2} y={458} /></svg>
  </div>
);

const m1Candles: Candle[] = [
  [963.5, 110, 134, 114, 118.5, 'd'], [974.3, 113, 176.5, 119.5, 175, 'd'], [985, 152, 197, 153, 178, 'u'], [995.7, 151, 167.5, 154, 159, 'd'],
  [1006.5, 157, 186, 157.5, 174.5, 'd'], [1017, 152, 180, 177, 179, 'u'], [1027.7, 167, 220.5, 176.500, 207.500, 'd'], [1038.500, 166, 213, 176, 210.500, 'u'],
  [1049.300, 168.500, 205.500, 177, 181.500, 'd'], [1060, 176, 200, 180, 183, 'd'], [1070.800, 150, 188, 168, 187.500, 'u'], [1081.500, 157, 176, 168, 171.500, 'u'],
  [1092, 156, 176, 169, 171.500, 'u'], [1103, 156, 172, 162, 170, 'u'], [1113.700, 156, 172.500, 157.500, 166.500, 'u'],
  [664.500, 311, 317, 311, 317, 'd'], [673.700, 316, 328, 317, 327.500, 'd'], [684.500, 318, 345, 327, 339, 'd'], [695, 333, 374.500, 336, 361, 'd'],
  [706, 325, 372, 338, 360, 'u'], [717, 304, 339, 305, 339, 'u'], [910, 67, 74, 74, 74, 'd'],
];

const m1Volumes = [
  [684, 20], [695, 26], [706, 32], [963, 22], [974, 20], [985, 21], [996, 20], [1006, 22], [1017, 21], [1028, 18], [1038, 16],
  [1049, 22], [1060, 20], [1071, 21], [1081, 18], [1092, 20], [1103, 18], [1113, 4],
];

const m1Prices = ['4125.70', '4124.80', '4123.90', '4123.00', '4122.10', '4121.20', '4120.30', '4119.40', '4118.50', '4117.60', '4116.70', '4115.80', '4114.90', '4114.00', '4113.10', '4112.20'];

const StatCard = ({ label, value, tone }: { label: string; value: string; tone: string }) => (
  <div className="h-7 border border-[#25323a] bg-[#1a2630] px-[6px]">
    <div className="pt-[3px] text-[7px] leading-[10px] text-[#94a0ab]">{label}</div>
    <div className={clsx('text-right text-[10px] leading-[14px]', tone)}>{value}</div>
  </div>
);

const PeriodDialog = () => (
  <form role="dialog" aria-label="自定义阶段" className="absolute top-[270px] left-[53px] w-[242px] bg-white px-[6px] pb-[5px] text-black shadow-[0_0_1px_#000]">
    <div className="flex h-5 items-center">
      <h3 className="flex-1">自定义阶段</h3>
      <button type="button" aria-label="帮助" className="mr-[22px] text-[9px] font-medium">?</button>
      <button type="button" aria-label="关闭" className="mr-[6px]">
        <svg width="8" height="8" viewBox="0 0 8 8" stroke="#222"><path d="M.5.5l7 7M7.500.5l-7 7" /></svg>
      </button>
    </div>
    <div className="mt-[11px] grid grid-cols-[70px_62px_33px_62px] items-center gap-y-[5px]">
      <label htmlFor="period" className="pr-[4px] text-right">阶段:</label>
      <div className="relative col-span-3">
        <select id="period" defaultValue="3d" className="block h-[14px] w-full appearance-none border border-[#adadad] bg-[#e1e1e1] pl-[2px] leading-[12px]">
          <option value="3d">最近三天</option>
        </select>
        <i className="pointer-events-none absolute inset-y-[2px] right-3 left-[2px] border border-dotted border-[#777]" />
        <Chevron className="pointer-events-none absolute top-[5px] right-[3px]" />
      </div>
      <label htmlFor="from" className="pr-[4px] text-right">从:</label>
      <div className="relative">
        <input id="from" defaultValue="2026/10/19" className="block h-[14px] w-full border border-[#8f8f8f] pl-px text-[7px] leading-[12px]" />
        <Chevron className="pointer-events-none absolute top-[5px] right-[3px]" />
      </div>
      <label htmlFor="to" className="pr-[4px] text-right">到:</label>
      <div className="relative">
        <input id="to" defaultValue="2026/10/22" className="block h-[14px] w-full border border-[#8f8f8f] pl-px text-[7px] leading-[12px]" />
        <Chevron className="pointer-events-none absolute top-[5px] right-[3px]" />
      </div>
    </div>
    <hr className="mt-[5px] border-[#b5b5b5]" />
    <div className="mt-[5px] flex gap-[6px] pl-[63px]">
      <button type="submit" className="h-[15px] w-[49px] border-2 border-[#0078d7] bg-[#e1e1e1] leading-[10px]">确定</button>
      <button type="button" className="h-[15px] w-[49px] border border-[#adadad] bg-[#e1e1e1] leading-[12px]">取消</button>
    </div>
  </form>
);

const GoldChart = () => (
  <div className="relative h-[372px] overflow-hidden bg-[#0f1720]">
    <svg width="538" height="372" viewBox="662 56 538 372" className="block">
      <path d="M662 157.500H1163" stroke="#a33434" />
      <Candles data={m1Candles} up="#3ab497" down="#e2564e" />
      {m1Volumes.map(([x, h]) => (
        <rect key={x} x={x - 0.7} y={414 - h} width="1.600" height={h} fill="#a08412" />
      ))}
      <path d="M960 150L972 163M960 166.500H972" stroke="#a8482f" strokeDasharray="2 2" />
      <path d="M706 357L716 326" stroke="#1565b5" strokeDasharray="2 2" />
      <Marker x={974.3} y={169.5} sell={false} />
      <Marker x={706} y={358.5} sell={false} />
      <Marker x={717} y={324.5} sell />
      <Axes
        left={663}
        right={1163.5}
        bottom={414.5}
        top={57.5}
        color="#8f9caa"
        prices={m1Prices.map((text, i): [number, string] => [66.5 + i * 21.77, text])}
        times={[
          [663, '21 Oct 2026'], [705, '21 Oct 06:13'], [748, '21 Oct 06:17'], [791, '21 Oct 06:21'], [834, '21 Oct 06:25'], [877, '21 Oct 06:29'],
          [920, '21 Oct 06:33'], [963, '21 Oct 06:37'], [1006, '21 Oct 06:41'], [1049, '21 Oct 06:45'], [1092, '21 Oct 06:49'],
        ]}
      />
      <path d="M662.500 57V428" stroke="#7a8794" />
      <PriceTag x={1165} y={157.5} text="4121.95" fill="#e23a2e" color="#3b0805" />
      <Badges x={666} y={61} />
      <text x="693" y="67" fontSize="6" fill="#98a5b3">XAUUSD, M1:  Gold vs US_Dollar / Spot</text>
      <CapLabel x={1137} y={65} name="金吒" />
    </svg>
    <JinzhaPanel className="top-[18px] left-3 h-[232px]">
      <div className="mt-[4px] grid grid-cols-2 gap-x-[7px] gap-y-[2px] px-[2px]">
        <StatCard label="今日盈利" value="59.53" tone="text-[#35b096]" />
        <StatCard label="昨日盈利" value="1.43" tone="text-[#35b096]" />
        <StatCard label="历史盈利" value="120.54" tone="text-[#35b096]" />
        <StatCard label="当前浮盈亏" value="0.00" tone="text-[#e0e0da]" />
      </div>
      <div className="relative mx-[2px] mt-[5px] h-[127px] border border-[#25323a] bg-[#17222b] px-[5px] pt-[4px] leading-[13px] whitespace-pre">
        <p className="text-[9px] leading-[16px] text-[#35b096]">多单  0单 / 0.00手     浮盈亏 0.00</p>
        <p className="text-[9px] leading-[16px] text-[#cf4b4b]">空单  0单 / 0.00手     浮盈亏 0.00</p>
        <p className="text-[9px] leading-[16px] text-[#c69c45]">合计 0.00手  |  总浮盈亏 0.00</p>
        <p>M1 RSI 53.99     ATR 1.34     5分钟涨跌 1.08</p>
        <p>单笔止盈 2    仓位上限 1.50手</p>
        <p>单向浮亏限制 1000    账户回撤 100%</p>
        <p className="text-[#8593a0]">收工:  净盈 100 / 净亏 0  (0关闭)</p>
        <div className="mt-[2px] flex items-center justify-between text-[#c69c45]">
          <span className="pt-[3px]">状态:  运行中 | 人工恢复运行</span>
          <button className="mr-[-6px] h-4 w-[60px] border border-[#8a713b] bg-[#1a2632] leading-[13px] text-[#dcdcd6]">暂停开仓</button>
        </div>
      </div>
    </JinzhaPanel>
    <PeriodDialog />
  </div>
);

const vipCandles: Candle[] = [
  [964, 620, 625, 621, 623.5, 'u'], [975, 602, 622, 607, 621.5, 'u'], [985.5, 605, 626, 607, 623, 'd'], [996, 612, 628, 614, 623, 'u'],
  [1007, 597, 616, 605, 614, 'u'], [1018, 604, 625, 605, 625, 'd'], [1028.5, 612, 630, 617, 624.500, 'u'], [1039, 600, 620, 611, 618, 'u'],
  [1060.500, 597, 606, 598, 605, 'u'], [1071, 578, 600, 586, 598.500, 'u'], [1082.500, 583, 602, 586, 595, 'd'], [1093, 594, 606, 594, 598, 'd'],
  [1103.500, 593, 604, 597, 599, 'u'], [1114, 595, 598, 595.500, 597.500, 'u'], [824, 585, 588, 588, 588, 'd'],
];

const vipMarkers: [number, number, boolean][] = [
  [728, 594, true], [814, 594, true], [803, 613, true], [846, 622.5, false], [749.5, 626, false], [792.5, 648.5, true], [760, 652, false],
  [964, 618.5, true], [964, 631.5, false], [1007, 597, true], [1018, 611, false], [1028.5, 620, true], [1028.5, 634, false], [1071, 594, true], [1093, 608, false],
];

const VipChart = () => (
  <div className="relative h-[124px] overflow-hidden bg-[#0f1720]">
    <svg width="538" height="124" viewBox="662 569 538 124" className="block">
      <path d="M662 594.500H1165" stroke="#49566a" strokeWidth="2" />
      <Candles data={vipCandles} up="#3ab497" down="#e2564e" />
      {Array.from({ length: 13 }, (_, i) => (
        <rect key={i} x={963.5 + i * 10.75} y={672 + (i % 4) * 0.5} width="1.300" height={7 - (i % 4) * 0.5} fill="#22c32a" />
      ))}
      <rect x="1103" y="675" width="1.300" height="4" fill="#22c32a" />
      <rect x="673" y="673" width="1.300" height="6" fill="#22c32a" />
      <Axes
        left={663}
        right={1165.5}
        bottom={679.5}
        top={571}
        color="#8f9caa"
        prices={[[572.5, '4127.05'], [615.5, '4117.35'], [637, '4112.50'], [658, '4107.65']]}
        times={[
          [663, '21 Oct 2026'], [706, '21 Oct 03:40'], [749, '21 Oct 04:00'], [792, '21 Oct 04:20'], [835, '21 Oct 04:40'], [878, '21 Oct 05:00'],
          [921, '21 Oct 05:20'], [963, '21 Oct 05:40'], [1006, '21 Oct 06:00'], [1049, '21 Oct 06:20'], [1092, '21 Oct 06:40'],
        ]}
      />
      <PriceTag x={1167} y={595} text="4121.82" fill="#8791a0" color="#111a24" />
      <Badges x={667} y={574} />
      <text x="694" y="579.500" fontSize="6" fill="#8795a3">XAUUSD.VIP, M5:  Gold US Dollar</text>
      <g fontSize="7" fill="#e6e61c">
        <text x="718" y="577">+</text>
        <text x="731" y="577">MTCommander统计</text>
      </g>
      <CapLabel x={1139} y={577.5} name="金吒" />
    </svg>
    <JinzhaPanel className="top-[18px] left-3 h-[92px] border-b-0">
      <div className="mt-[4px] grid grid-cols-4 gap-[3px] px-[2px]">
        {[['今日', '63'], ['累计', '63'], ['浮亏', '-121'], ['历史', '1170']].map(([label, value]) => (
          <div key={label} className="h-7 border border-[#25323a] bg-[#1a2630] text-center">
            <div className="pt-[2px] text-[7px] leading-[10px] text-[#94a0ab]">{label}</div>
            <div className={clsx('text-[14px] leading-[16px]', value.startsWith('-') ? 'text-[#d94c48]' : 'text-[#35b096]')}>{value}</div>
          </div>
        ))}
      </div>
      <p className="mx-[2px] mt-[4px] h-10 border border-[#25323a] bg-[#17222b] px-[5px] pt-[5px] text-[9px] leading-[16px] whitespace-pre text-[#35b096]">
        多单  0单 / 0.00手     浮盈亏 0.00
      </p>
    </JinzhaPanel>
    <svg width="538" height="124" viewBox="662 569 538 124" className="absolute top-0 left-0">
      <g fill="none" strokeDasharray="2.500 2">
        <path d="M664 593L728 595M664 596L735 597M664 599L728 594M749 626L792 648M760 652H792M1018 611L1028 634M964 618V631" stroke="#17559a" />
        <path d="M664 609L749 621M803 616L846 619M814 594L846 622M1007 597L1028 618M1071 594L1093 605" stroke="#a8482f" />
      </g>
      <path d="M1029 605H1088" stroke="#2f9c84" />
      {vipMarkers.map(([x, y, sell]) => (
        <Marker key={`${x}-${y}`} x={x} y={y} sell={sell} />
      ))}
      <rect x="1026" y="600" width="32" height="12" fill="#3ab497" />
      <text x="1033" y="609.500" fontSize="9" fill="#0a2a24">4.89</text>
    </svg>
  </div>
);

/* ---------- data ---------- */

const scalperColumns: Column[] = [
  { label: '交易品种', width: 'w-[84px]', kind: 'symbol' },
  { label: '时间', width: 'w-[94px]', sorted: true },
  { label: '类型', width: 'w-[65px]' },
  { label: '交易量', width: 'w-[64px]' },
  { label: '价位', width: 'w-[64px]' },
  { label: '止损', width: 'w-[64px]' },
  { label: '止盈', width: 'w-[65px]', kind: 'closable' },
  { label: '价位', width: 'w-[64px]' },
  { label: '盈利', kind: 'closable' },
];

const scalperRows = [
  ['06:38:33', 'buy', '0.01', '4121.93', '4122.54', '4121.95', '0.02'],
  ['06:38:55', 'buy', '0.02', '4121.68', '4122.54', '4121.95', '0.54'],
  ['06:39:00', 'buy', '0.02', '4121.25', '4122.54', '4121.95', '1.40'],
  ['06:39:08', 'buy', '0.02', '4120.80', '4122.54', '4121.95', '2.30'],
  ['06:43:32', 'buy', '0.02', '4120.27', '4122.54', '4121.95', '3.36'],
  ['06:43:35', 'sell', '0.01', '4119.85', '', '4122.13', '-2.28'],
  ['06:43:38', 'buy', '0.05', '4119.72', '4122.54', '4121.95', '11.15'],
  ['06:44:08', 'sell', '0.01', '4120.40', '', '4122.13', '-1.73'],
  ['06:44:47', 'sell', '0.01', '4121.32', '', '4122.13', '-0.81'],
  ['06:47:10', 'sell', '0.01', '4122.03', '', '4122.13', '-0.10'],
].map(([time, side, lots, open, tp, price, profit]) => ['xauusd.c', `2026.10.21 ${time}`, side, lots, open, '', tp, price, profit]);

const hourColumns: Column[] = [
  { label: '交易品种', width: 'w-[79px]', kind: 'symbol' },
  { label: '订单号', width: 'w-[52px]', kind: 'left' },
  { label: '时间', width: 'w-[90px]', sorted: true },
  { label: '类型', width: 'w-[59px]' },
  { label: '交易量', width: 'w-[59px]' },
  { label: '价位', width: 'w-[58px]' },
  { label: '止损', width: 'w-[59px]' },
  { label: '止盈', width: 'w-[59px]' },
  { label: '价位', width: 'w-[59px]' },
  { label: '盈利', kind: 'closable' },
];

const hourRows = [
  ['349226006', '06:14:47', 'sell', '4115.73', '4122.13', '-6.40'],
  ['349251861', '06:16:09', 'sell', '4117.80', '4122.13', '-4.33'],
  ['349286001', '06:21:56', 'sell', '4120.09', '4122.13', '-2.04'],
  ['349320737', '06:30:21', 'sell', '4122.39', '4122.13', '0.26'],
  ['349339841', '06:31:26', 'sell', '4124.45', '4122.13', '2.32'],
  ['349345504', '06:31:34', 'buy', '4124.95', '4121.95', '-3.00'],
  ['349364165', '06:38:10', 'buy', '4122.97', '4121.95', '-1.02'],
  ['349381829', '06:39:04', 'buy', '4121.00', '4121.95', '0.95'],
].map(([id, time, side, open, price, profit]) => ['xauusd.c', id, `2026.10.21 ${time}`, side, '0.01', open, '', '', price, profit]);

const vipColumns: Column[] = [
  { label: '交易品种', width: 'w-[67px]', kind: 'symbol', sorted: true },
  { label: '订单号', width: 'w-[44px]', kind: 'left' },
  { label: '时间', width: 'w-[75px]' },
  { label: '类型', width: 'w-[50px]' },
  { label: '交易量', width: 'w-[49px]' },
  { label: '价位', width: 'w-[50px]' },
  { label: '止损', width: 'w-[50px]' },
  { label: '止盈', width: 'w-[50px]' },
  { label: '价位', width: 'w-[49px]' },
  { label: '盈利', width: 'w-[55px]', kind: 'closable' },
  { label: '注释' },
];

const vipRows = [['xauusd-vip', '8435325...', '2026.10.21 06:3...', 'sell', '0.03', '4121.29', '', '', '4122.08', '-2.37', '金吒-首单SELL']];

const historyColumns: Column[] = [
  { label: '时间', width: 'w-[46px]', kind: 'symbol' },
  { label: '交易...', width: 'w-[32px]' },
  { label: '订...', width: 'w-[24px]' },
  { label: '...', width: 'w-[22px]' },
  { label: '交易量', width: 'w-[36px]' },
  { label: '价位', width: 'w-[34px]' },
  { label: '止损', width: 'w-[36px]' },
  { label: '止盈', width: 'w-[36px]' },
  { label: '时间', width: 'w-[53px]', sorted: true },
  { label: '价位', width: 'w-[36px]' },
  { label: '盈利', width: 'w-[38px]', kind: 'signed' },
  { label: '变更', width: 'w-[39px]', kind: 'signed' },
  { label: '注释' },
];

const historyRows = [
  ['2026....', 'xauu...', '347...', 'buy', '0.01', '4113.74', '', '', '2026.10.21...', '4114.85', '1.11', '0.03 %', '金吒-首单BUY'],
  ['2026....', 'xauu...', '347...', 'sell', '0.01', '4121.37', '', '', '2026.10.21...', '4121.60', '-0.23', '-0.01 %', '金吒-首单SELL'],
  ['2026....', 'xauu...', '347...', 'sell', '0.01', '4125.11', '', '', '2026.10.21...', '4121.60', '3.51', '0.09 %', '金吒-空2层'],
];

const emptyColumns: Column[] = [
  { label: '交易品种', width: 'w-[57px]', kind: 'symbol', sorted: true },
  { label: '时间', width: 'w-[65px]' },
  { label: '类型', width: 'w-[43px]' },
  { label: '交易量', width: 'w-[43px]' },
  { label: '价位', width: 'w-[43px]' },
  { label: '止损', width: 'w-[43px]' },
  { label: '止盈', width: 'w-[43px]' },
  { label: '价位', width: 'w-[42px]' },
  { label: '盈利', width: 'w-[48px]' },
  { label: '注释' },
];

const Splitter = () => <div className="h-[3px] shrink-0 bg-[#f0f0f0]" />;

export default function App() {
  return (
    <main className="relative grid min-h-screen grid-cols-[658fr_542fr] overflow-hidden bg-[#0c6ab8] font-['Noto_Sans','Noto_Sans_CJK_SC',sans-serif] text-[8px] leading-[12px]">
      <div className="flex min-w-0 flex-col pt-[4px]">
        <article className="mb-[5px] flex flex-col">
          <TitleBar className="h-5 pl-[2px]" title="54042043 - GTCGlobalSA-Server 4 - Hedge - GTC Global SA (Pty) Ltd - [XAUUSD.c,M5]" />
          <MenuBar className="h-[15px] pt-px pl-px" />
          <Toolbar className="pl-[6px]" battery="w-[9px]" />
          <ScalperChart />
          <Splitter />
          <Terminal
            sidebar="w-[9px]"
            scroll="mt-[52px] h-[104px]"
            tabs={<TabBar active="交易" badges={{ 文章: '5', 代码库: '4' }} className="ml-[4px] w-[391px]" />}
          >
            <div className="pb-[9px]">
              <TerminalTable
                columns={scalperColumns}
                rows={scalperRows}
                sellAt={2}
                summary={['结余: 52 449.66 USC', '净值: 52 452.87', '预付款: 132.22', '可用预付款: 52 320.65', '预付款维持率: 39 670.90 %']}
                total="3.21"
                totalAt={8}
                addable
              />
            </div>
          </Terminal>
          <StatusBar first="w-[215px]" ping="57.5 / 2" className="h-[15px]" />
        </article>

        <article className="flex flex-col">
          <TitleBar className="h-5" title="55683233 - GTCGlobalSA-Server 5 - Hedge - GTC Global SA (Pty) Ltd - [XAUUSD.c,H1]" />
          <MenuBar className="h-[15px] pt-px" />
          <Toolbar className="pl-[2px]" battery="w-[7px]" />
          <HourChart />
          <Splitter />
          <Terminal
            sidebar="w-[4px]"
            scroll="mt-[9px] h-[104px]"
            tabs={<TabBar active="交易" badges={{ 代码库: '4' }} className="ml-[5px] w-[384px]" />}
          >
            <div className="pb-px">
              <TerminalTable
                columns={hourColumns}
                rows={hourRows}
                sellAt={3}
                mark="minus"
                summary={['结余: 10 069.33 USC', '净值: 10 047.91', '预付款: 24.96', '可用预付款: 10 022.95', '预付款维持率: 40 256.05 %']}
                total="-21.42"
                totalAt={9}
                addable
              />
            </div>
          </Terminal>
          <StatusBar first="w-[211px]" ping="152.31 m" className="h-[14px]" />
        </article>

        <article className="flex flex-1 flex-col">
          <MenuBar className="h-[14px]" />
          <Toolbar className="pl-[3px]" battery="w-[6px]" signalMuted zoomMuted />
          <div className="h-[5px] bg-[#0f1720]" />
          <Splitter />
          <Terminal
            sidebar="w-[5px]"
            tabs={<TabBar active="交易" badges={{ 邮箱: '11', 代码库: '4' }} className="ml-[5px] w-[396px]" signalMuted />}
          >
            <TerminalTable
              columns={vipColumns}
              rows={vipRows}
              sellAt={3}
              mark="minus"
              summary={['结余: 1 124.75 USD', '净值: 1 122.38', '预付款: 24.73', '可用预付款: 1 097.65', '预付款维持率: 4 538.54 %']}
              total="-2.37"
              totalAt={9}
            />
          </Terminal>
        </article>
      </div>

      <div className="flex min-w-0 flex-col pt-[2px] pl-[4px]">
        <article className="mr-[2px] flex flex-col">
          <TitleBar className="h-[18px] pl-[4px]" title="52153555 - GTCGlobalSA-Server 2 - Hedge - GTC Global SA (Pty) Ltd - [XAUUSD,M1]" />
          <MenuBar className="h-4 pt-[2px] pl-[3px]" />
          <Toolbar className="pl-2" battery="w-[6px]" />
          <GoldChart />
          <Splitter />
          <Terminal
            sidebar="w-[11px]"
            scroll="mt-[36px] h-[12px]"
            tabs={<TabBar active="历史" badges={{ 邮箱: '10' }} className="ml-[4px] w-[389px]" />}
          >
            <div className="pb-[2px]">
              <TerminalTable
                columns={historyColumns}
                rows={historyRows}
                sellAt={3}
                summary={['盈利: 125.46', '信用: 0.00', '入金: 408.69', '提款: -317.00', '结余: 217.15']}
                total="126.34"
                totalAt={10}
                highlightFirst
              />
            </div>
          </Terminal>
          <StatusBar first="w-[217px]" className="h-[15px]" />
        </article>

        <article className="flex flex-1 flex-col">
          <MenuBar className="h-[9px] items-end pl-px" />
          <Toolbar className="pl-2" battery="w-[7px]" signalMuted />
          <VipChart />
          <Splitter />
          <Terminal
            sidebar="w-[11px]"
            tabs={<TabBar active="交易" badges={{ 邮箱: '11' }} className="ml-[4px] w-[389px]" signalMuted />}
          >
            <TerminalTable
              columns={emptyColumns}
              rows={[]}
              sellAt={2}
              mark="dot"
              summary={['结余: 1 418.84 USD', '净值: 1 418.84', '可用预付款: 1 418.84']}
              total="0.00"
              totalAt={8}
            />
          </Terminal>
          <StatusBar first="w-[217px]" className="h-[11px]" />
        </article>
      </div>

      {/* highlighted region */}
      <div className="pointer-events-none absolute top-[18px] right-[6px] left-[672px] h-[492px] border-3 border-[#fb4f4f]" />
      <button aria-label="展开侧栏" className="absolute top-[773px] -right-2 flex size-6 items-center rounded-full bg-[#1a7bf2] pl-[7px]">
        <svg width="5" height="8" viewBox="0 0 5 8" fill="none" stroke="#fff" strokeWidth="1.400"><path d="M4 .8L1 4l3 3.200" /></svg>
      </button>
    </main>
  );
}
